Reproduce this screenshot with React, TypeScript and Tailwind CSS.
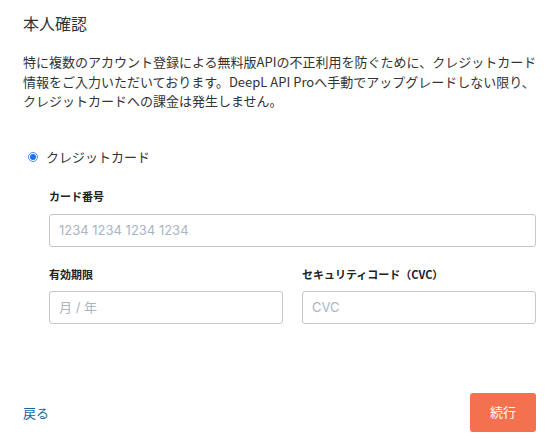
import { useState } from "react";

const font = { fontFamily: '"Noto Sans CJK JP", "Noto Sans", sans-serif' };
const fieldFont = { fontFamily: 'Inter, "Noto Sans CJK JP", sans-serif' };

const inputClass =
  "w-full h-[33px] rounded-[3px] border border-[#c6c6c6] bg-white px-[9px] text-[13px] text-[#333] placeholder:text-[#a9b4c4] outline-none focus:border-[#8ab4f8]";

const App = () => {
  const [method, setMethod] = useState("card");

  return (
    <div className="w-[560px] h-[447px] bg-white text-[#333]" style={font}>
      <div className="flex flex-col pl-[23px] pr-[24px] pt-[12px]">
        {/* Title */}
        <h1 className="text-[16px] leading-[22px] text-[#333]">本人確認</h1>

        {/* Description */}
        <p className="mt-[18px] text-[13px] leading-[19.5px] text-[#333] whitespace-nowrap">
          特に複数のアカウント登録による無料版APIの不正利用を防ぐために、クレジットカード
          <br />
          情報をご入力いただいております。DeepL API Proへ手動でアップグレードしない限り、
          <br />
          クレジットカードへの課金は発生しません。
        </p>

        {/* Payment method */}
        <label
          className="mt-[36px] flex items-center h-[20px] pl-[5px] cursor-pointer"
          onClick={() => setMethod("card")}
        >
          <span className="flex items-center justify-center w-[10px] h-[10px] rounded-full border border-[#4a8ef0] bg-white">
            {method === "card" && (
              <span className="w-[6px] h-[6px] rounded-full bg-[#1a73e8]" />
            )}
          </span>
          <span className="ml-[8px] text-[13px] text-[#333]">クレジットカード</span>
        </label>

        {/* Card fields */}
        <div className="pl-[26px] flex flex-col">
          <div className="mt-[21px] text-[11px] leading-[16px] font-bold text-[#222]">
            カード番号
          </div>
          <input
            className={`mt-[10px] ${inputClass}`}
            style={fieldFont}
            placeholder="1234 1234 1234 1234"
          />

          <div className="mt-[19px] grid grid-cols-2 gap-x-[19px]">
            <div className="flex flex-col">
              <div className="text-[11px] leading-[16px] font-bold text-[#222]">
                有効期限
              </div>
              <input
                className={`mt-[9px] ${inputClass}`}
                style={fieldFont}
                placeholder="月 / 年"
              />
            </div>
            <div className="flex flex-col">
              <div className="text-[11px] leading-[16px] font-bold text-[#222]">
                セキュリティコード（CVC）
              </div>
              <input
                className={`mt-[9px] ${inputClass}`}
                style={fieldFont}
                placeholder="CVC"
              />
            </div>
          </div>
        </div>

        {/* Footer */}
        <div className="mt-[69px] flex items-center justify-between">
          <a href="#" className="text-[13px] text-[#1369a0] pt-[2px]">
            戻る
          </a>
          <button className="w-[66px] h-[39px] rounded-[3px] bg-[#f4714f] text-white text-[13px]">
            続行
          </button>
        </div>
      </div>
    </div>
  );
};

export default App;
